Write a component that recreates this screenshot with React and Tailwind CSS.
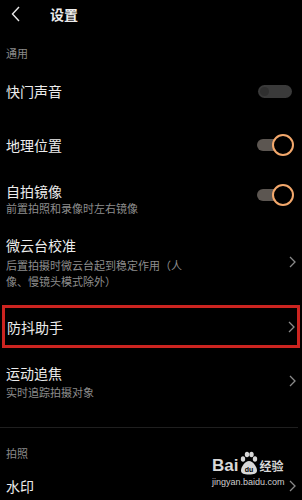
import React from 'react';

const font = { fontFamily: '"Noto Sans CJK SC", "Noto Sans", sans-serif' };

function Chevron() {
    return (
        <svg width="7" height="12" viewBox="0 0 7 12" className="shrink-0">
            <path d="M1 1l5 5-5 5" fill="none" stroke="#8a8a8a" strokeWidth="1.3" />
        </svg>
    );
}

function ToggleOff() {
    return (
        <div className="w-[34px] h-[13px] rounded-full bg-[#3a3a3a] flex items-center pl-[2px]">
            <div className="w-[9px] h-[9px] rounded-full bg-[#2f2f2f]" />
        </div>
    );
}

function ToggleOn() {
    return (
        <div className="relative w-[37px] h-[22px] flex items-center">
            <div className="w-[30px] h-[12px] rounded-l-full bg-[#5c5651]" />
            <div className="absolute right-0 top-0 w-[22px] h-[22px] rounded-full border-[2.5px] border-[#f3a86c] bg-black" />
        </div>
    );
}

function BaiduMark() {
    return (
        <div className="absolute left-[212px] top-[451px] flex flex-col items-start pointer-events-none">
            <div className="flex items-end">
                <span className="text-[17px] leading-[18px] font-bold text-[#d8d8d8]" style={{ fontFamily: '"Liberation Sans", sans-serif' }}>
                    Bai
                </span>
                <svg width="19" height="24" viewBox="0 0 19 24" className="mx-[1px]">
                    <ellipse cx="4" cy="8" rx="2.2" ry="2.8" fill="#d8d8d8" />
                    <ellipse cx="8" cy="3.5" rx="2.2" ry="2.8" fill="#d8d8d8" />
                    <ellipse cx="12.5" cy="3.5" rx="2.2" ry="2.8" fill="#d8d8d8" />
                    <ellipse cx="16" cy="8" rx="2.2" ry="2.8" fill="#d8d8d8" />
                    <path d="M10 10c-4 0-8 6-8 9.5 0 3 3 4 8 4s8-1 8-4c0-3.5-4-9.5-8-9.5z" fill="#d8d8d8" />
                    <text x="10" y="21" textAnchor="middle" fontSize="7" fontWeight="bold" fill="#000" fontFamily="Liberation Sans, sans-serif">du</text>
                </svg>
                <span className="text-[12px] leading-[18px] font-bold text-[#d8d8d8]" style={font}>经验</span>
            </div>
            <span className="text-[9px] leading-[12px] text-[#cfcfcf] mt-[1px]" style={{ fontFamily: '"Liberation Sans", sans-serif' }}>
                jingyan.baidu.com
            </span>
        </div>
    );
}

export default function App() {
    return (
        <div className="relative w-[302px] h-[500px] bg-black overflow-hidden text-[#ececec]" style={font}>
            {/* Header */}
            <div className="h-[28px] flex items-center">
                <svg width="10" height="16" viewBox="0 0 10 16" className="ml-[11px]">
                    <path d="M8 1L1.5 8 8 15" fill="none" stroke="#e8e8e8" strokeWidth="1.4" />
                </svg>
                <span className="ml-[29px] text-[14px] font-bold leading-[20px]">设置</span>
            </div>

            {/* 通用 */}
            <div className="mt-[18px] px-[6px] text-[11px] leading-[14px] text-[#8a8a8a]">通用</div>

            <div className="mt-[21px] pl-[6px] pr-[10px] flex items-center justify-between">
                <span className="text-[14px] leading-[20px]">快门声音</span>
                <ToggleOff />
            </div>

            <div className="mt-[29px] pl-[6px] pr-[8px] h-[30px] flex items-center justify-between">
                <span className="text-[14px] leading-[20px]">地理位置</span>
                <ToggleOn />
            </div>

            <div className="mt-[21px] pl-[6px] pr-[8px] flex items-center justify-between">
                <div className="flex flex-col">
                    <span className="text-[14px] leading-[20px]">自拍镜像</span>
                    <span className="text-[11px] leading-[14px] text-[#8d8d8d]">前置拍照和录像时左右镜像</span>
                </div>
                <div className="-mt-[6px]">
                    <ToggleOn />
                </div>
            </div>

            <div className="mt-[20px] pl-[6px] pr-[6px] flex items-center justify-between">
                <div className="flex flex-col">
                    <span className="text-[14px] leading-[20px]">微云台校准</span>
                    <span className="mt-[2px] text-[11px] leading-[16px] text-[#8d8d8d]">
                        后置拍摄时微云台起到稳定作用（人
                        <br />
                        像、慢镜头模式除外）
                    </span>
                </div>
                <Chevron />
            </div>

            {/* Highlighted row */}
            <div className="mt-[16px] mx-[2px] h-[43px] border-[3px] border-[#cc2420] pl-[2px] pr-[2px] flex items-center justify-between">
                <span className="text-[14px] leading-[20px]">防抖助手</span>
                <Chevron />
            </div>

            <div className="mt-[15px] pl-[6px] pr-[6px] flex items-center justify-between">
                <div className="flex flex-col">
                    <span className="text-[14px] leading-[20px]">运动追焦</span>
                    <span className="mt-[2px] text-[11px] leading-[14px] text-[#8d8d8d]">实时追踪拍摄对象</span>
                </div>
                <Chevron />
            </div>

            <div className="mt-[28px] mr-[4px] h-px bg-[#1f1f1f]" />

            {/* 拍照 */}
            <div className="mt-[18px] px-[6px] text-[11px] leading-[14px] text-[#8a8a8a]">拍照</div>

            <div className="mt-[16px] pl-[6px] pr-[6px] flex items-center justify-between">
                <span className="text-[14px] leading-[20px]">水印</span>
                <Chevron />
            </div>

            <BaiduMark />
        </div>
    );
}
